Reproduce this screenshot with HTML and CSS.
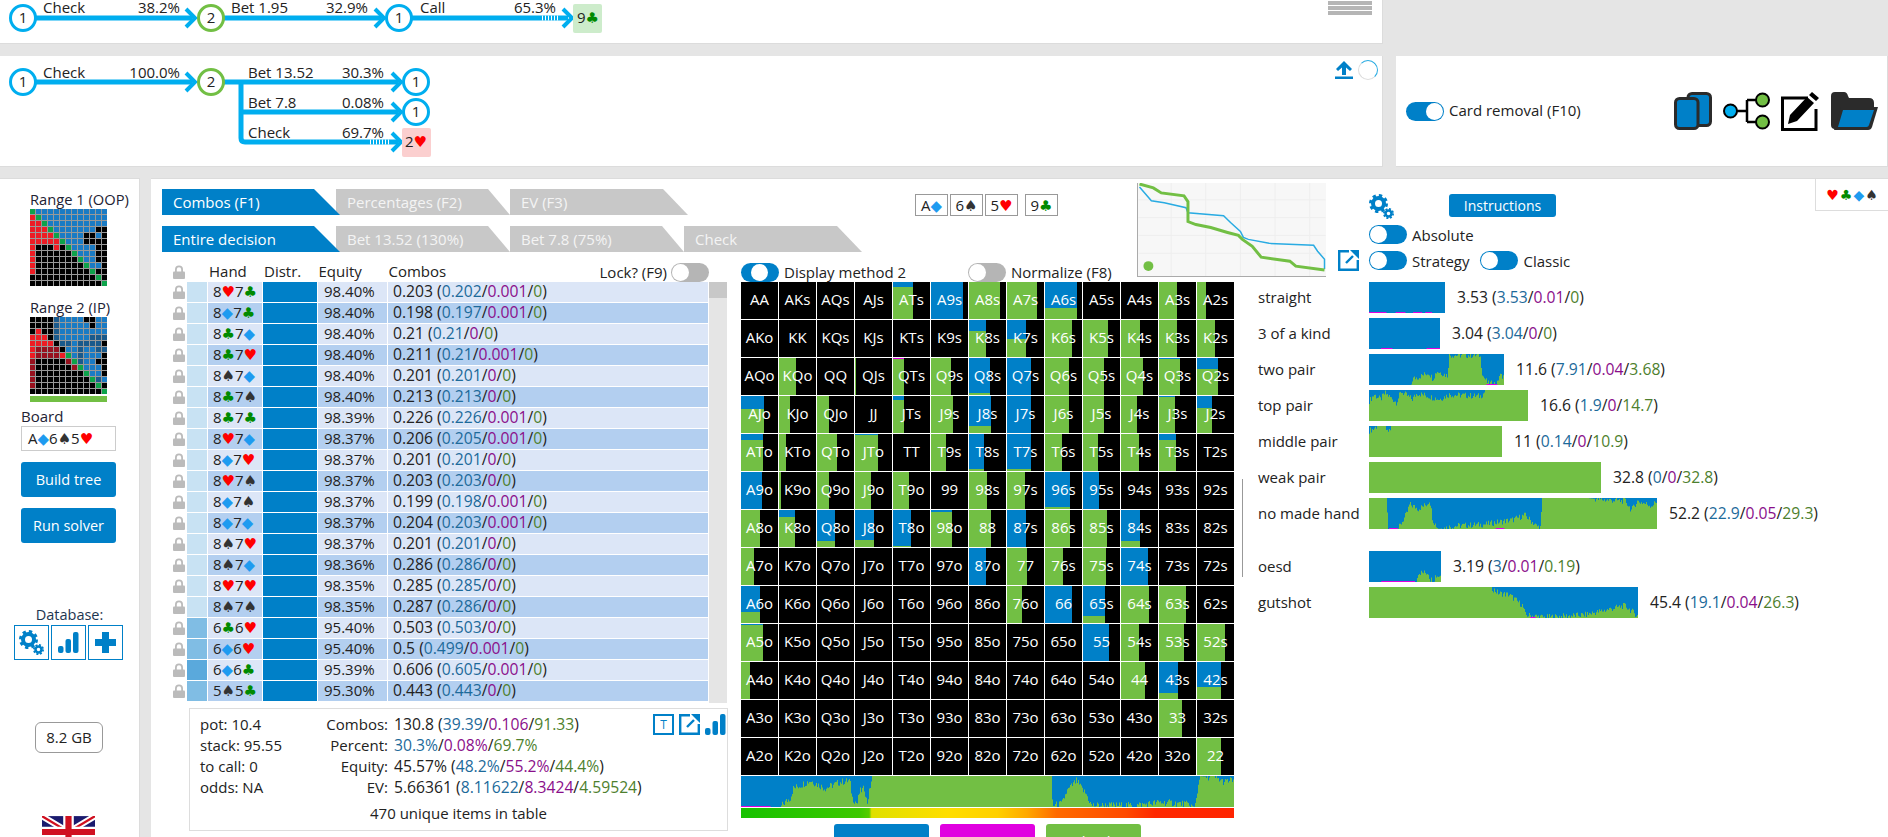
FILE: index.html
```html
<!DOCTYPE html>
<html lang="en">
  <head>
    <meta charset="UTF-8" />
    <title>Solver</title>
    <link rel="stylesheet" href="styles.css">
  </head>
  <body>
    <svg class="sprites" width="0" height="0">
      <symbol id="lock" viewBox="0 0 14 14">
        <path d="M3 7V4.500a4 4 0 0 1 8 0V7H9.200V4.500a2.200 2.200 0 0 0-4.400 0V7z" />
        <rect x="1" y="6.500" width="12" height="7.500" rx="1" />
      </symbol>
      <symbol id="gears" viewBox="0 0 25 25">
        <circle cx="9.500" cy="9.500" r="5.500" fill="none" stroke="currentColor" stroke-width="4" />
        <circle cx="9.500" cy="9.500" r="8" fill="none" stroke="currentColor" stroke-width="3" stroke-dasharray="3.300 3" />
        <circle cx="19.500" cy="19.500" r="3" fill="none" stroke="currentColor" stroke-width="2.500" />
        <circle cx="19.500" cy="19.500" r="4.600" fill="none" stroke="currentColor" stroke-width="1.800" stroke-dasharray="2 1.600" />
      </symbol>
      <symbol id="bars" viewBox="0 0 21 21">
        <rect x="0" y="14" width="5.500" height="7" rx="2" />
        <rect x="7.500" y="7" width="5.500" height="14" rx="2" />
        <rect x="15" y="0" width="5.500" height="21" rx="2" />
      </symbol>
      <symbol id="expand" viewBox="0 0 21 21">
        <path d="M11 1.200H1.200v18.600h18.600V10" fill="none" stroke="currentColor" stroke-width="2.400" />
        <path d="M8 13l7-7" fill="none" stroke="currentColor" stroke-width="2.400" />
        <path d="M12 0h9v9z" />
      </symbol>
    </svg>

    <div class="top-row">
      <div class="panel line-one">
        <svg class="flow" width="620" height="43">
          <path class="edge" d="M36 18H192" />
          <path class="edge" d="M224 18H381" />
          <path class="edge" d="M412 18H568" />
          <path class="dash" d="M542 18H560" />
          <path class="head" d="M186 9l9 9-9 9" />
          <path class="head" d="M375 9l9 9-9 9" />
          <path class="head" d="M563 9l9 9-9 9" />
          <circle class="node-a" cx="23" cy="18" r="12.500" />
          <circle class="node-b" cx="211" cy="18" r="12.500" />
          <circle class="node-a" cx="399" cy="18" r="12.500" />
          <text class="num" x="23" y="23">1</text>
          <text class="num" x="211" y="23">2</text>
          <text class="num" x="399" y="23">1</text>
          <text x="43" y="13">Check</text>
          <text class="end" x="180" y="13">38.2%</text>
          <text x="231" y="13">Bet 1.95</text>
          <text class="end" x="368" y="13">32.9%</text>
          <text x="420" y="13">Call</text>
          <text class="end" x="556" y="13">65.3%</text>
          <rect class="tile-club" x="573" y="4" width="29" height="29" rx="2" />
          <text x="577" y="23">9<tspan class="s-c">&#9827;</tspan></text>
        </svg>
        <div class="stripes"><i></i><i></i><i></i></div>
      </div>
    </div>

    <div class="mid-row">
      <div class="panel line-two">
        <svg class="flow" width="620" height="110">
          <path class="edge" d="M36 26H192" />
          <path class="edge" d="M224 26H398" />
          <path class="edge" d="M241 26V82q0 4 4 4H398" />
          <path class="edge" d="M241 56H398" />
          <path class="dash" d="M370 86H390" />
          <path class="head" d="M186 17l9 9-9 9" />
          <path class="head" d="M392 17l9 9-9 9" />
          <path class="head" d="M392 47l9 9-9 9" />
          <path class="head" d="M392 77l9 9-9 9" />
          <circle class="node-a" cx="23" cy="26" r="12.500" />
          <circle class="node-b" cx="211" cy="26" r="12.500" />
          <circle class="node-a" cx="416" cy="26" r="12.500" />
          <circle class="node-a" cx="416" cy="56" r="12.500" />
          <text class="num" x="23" y="31">1</text>
          <text class="num" x="211" y="31">2</text>
          <text class="num" x="416" y="31">1</text>
          <text class="num" x="416" y="61">1</text>
          <text x="43" y="22">Check</text>
          <text class="end" x="180" y="22">100.0%</text>
          <text x="248" y="22">Bet 13.52</text>
          <text class="end" x="384" y="22">30.3%</text>
          <text x="248" y="52">Bet 7.8</text>
          <text class="end" x="384" y="52">0.08%</text>
          <text x="248" y="82">Check</text>
          <text class="end" x="384" y="82">69.7%</text>
          <rect class="tile-heart" x="402" y="72" width="29" height="29" rx="2" />
          <text x="405" y="91">2<tspan class="s-h">&#9829;</tspan></text>
        </svg>
        <div class="sync">
          <svg class="blue" width="18" height="18" viewBox="0 0 18 18"><path d="M9 0l8 8-2 2-4-3.500V14H7V6.500L3 10 1 8zM0 15.500h18V18H0z" /></svg>
          <span class="spinner"></span>
        </div>
      </div>
      <div class="panel removal">
        <span class="toggle on"></span>
        <span class="removal-label">Card removal (F10)</span>
        <div class="tools">
          <svg width="38" height="38" viewBox="0 0 38 38">
            <rect x="14" y="1.500" width="22.500" height="32" rx="4" fill="#0080c8" stroke="#2b2b2b" stroke-width="3" />
            <rect x="1.500" y="6.500" width="22.500" height="30" rx="4" fill="#0080c8" stroke="#2b2b2b" stroke-width="3" />
          </svg>
          <svg width="47" height="38" viewBox="0 0 47 38">
            <path d="M14 19H24M24 8H34M24 30H34M24 8V30" fill="none" stroke="#000" stroke-width="2.500" />
            <circle cx="7.500" cy="19" r="6.500" fill="#00aeef" stroke="#000" stroke-width="2" />
            <circle cx="39.500" cy="8" r="6.500" fill="#72bf44" stroke="#000" stroke-width="2" />
            <circle cx="39.500" cy="30" r="6.500" fill="#72bf44" stroke="#000" stroke-width="2" />
          </svg>
          <svg width="39" height="39" viewBox="0 0 39 39">
            <path d="M27 6H1.500v31.500H35V17" fill="none" stroke="#000" stroke-width="3" />
            <path d="M31 0l7 6-3 3-7-6zM26 5l7 6-17 18-9 3 2-9z" />
          </svg>
          <svg width="47" height="38" viewBox="0 0 47 38">
            <path d="M0 4q0-4 4-4h9q3 0 4 4l1 2h20q5 0 5 5v4H11L5 37H4q-4 0-4-4z" fill="#2b2b2b" />
            <path d="M10 15h37l-6 20q-1 3-4 3H3z" fill="#2b2b2b" />
            <path d="M12 18h31l-5 15q-.5 2-2.500 2H7z" fill="#0080c8" />
          </svg>
        </div>
      </div>
    </div>

    <div class="bottom-row">
      <aside class="panel sidebar">
        <div class="side-label range-first">Range 1 (OOP)</div>
        <div class="mini" id="range1"></div>
        <div class="side-label range-second">Range 2 (IP)</div>
        <div class="mini" id="range2"></div>
        <div class="range-bar"></div>
        <div class="side-label board-label">Board</div>
        <div class="board-input">A<span class="s-d">&#9670;</span>6<span class="s-s">&#9824;</span>5<span class="s-h">&#9829;</span></div>
        <button class="side-btn">Build tree</button>
        <button class="side-btn">Run solver</button>
        <div class="db-label">Database:</div>
        <div class="db-btns">
          <button class="icon-btn"><svg width="25" height="25"><use href="#gears" /></svg></button>
          <button class="icon-btn"><svg width="21" height="21"><use href="#bars" /></svg></button>
          <button class="icon-btn"><svg width="21" height="21" viewBox="0 0 21 21"><path d="M7 0h7v7h7v7h-7v7H7v-7H0V7h7z" /></svg></button>
        </div>
        <div class="memory">8.2 GB</div>
        <svg class="flag" width="53" height="32" viewBox="0 0 60 36">
          <rect width="60" height="36" fill="#1a1a6e" />
          <path d="M0 0L60 36M60 0L0 36" stroke="#fff" stroke-width="7" />
          <path d="M0 0L60 36M60 0L0 36" stroke="#d01020" stroke-width="2.500" />
          <path d="M30 0V36M0 18H60" stroke="#fff" stroke-width="12" />
          <path d="M30 0V36M0 18H60" stroke="#d01020" stroke-width="7" />
        </svg>
      </aside>

      <main class="panel main">
        <div class="main-grid">
          <div class="head-row">
            <div class="tab-stack">
              <div class="tabs">
                <div class="tab active">Combos (F1)</div>
                <div class="tab">Percentages (F2)</div>
                <div class="tab">EV (F3)</div>
              </div>
              <div class="tabs">
                <div class="tab active">Entire decision</div>
                <div class="tab">Bet 13.52 (130%)</div>
                <div class="tab">Bet 7.8 (75%)</div>
                <div class="tab">Check</div>
              </div>
            </div>
            <div class="cards">
              <span class="card">A<span class="s-d">&#9670;</span></span>
              <span class="card">6<span class="s-s">&#9824;</span></span>
              <span class="card">5<span class="s-h">&#9829;</span></span>
              <span class="card river">9<span class="s-c">&#9827;</span></span>
            </div>
          </div>

          <div class="chart-box">
            <svg class="chart" width="189" height="94" viewBox="1137 183 189 94">
              <path class="chart-grid" d="M1137 200H1326M1137 218H1326M1137 236H1326M1137 254H1326M1170 183V277M1205 183V277M1240 183V277M1275 183V277M1310 183V277" />
              <polyline class="line-blue" points="1138,187 1150,201 1163,203 1185,208 1187,213 1223,216 1230,223 1240,232 1243,238 1248,240 1269,244 1314,246 1318,252 1325,260 1325,270" />
              <polyline class="line-green" points="1138,184 1152,188 1160,193 1183,196 1187,202 1187,222 1195,225 1210,228 1227,233 1238,236 1242,240 1252,247 1261,258 1290,262 1296,267 1325,271" />
              <circle cx="1147" cy="267" r="5" fill="#72bf44" />
            </svg>
            <svg class="blue chart-expand" width="21" height="21"><use href="#expand" /></svg>
          </div>

          <div class="settings">
            <div class="settings-top">
              <svg class="blue" width="25" height="25"><use href="#gears" /></svg>
              <button class="instructions">Instructions</button>
            </div>
            <div class="setting-line"><span class="toggle left"></span>Absolute</div>
            <div class="setting-line"><span class="toggle left"></span>Strategy<span class="toggle left classic"></span>Classic</div>
          </div>

          <div class="table-head">
            <svg class="lock"><use href="#lock" /></svg>
            <span class="th th-hand">Hand</span>
            <span class="th th-distr">Distr.</span>
            <span class="th th-equity">Equity</span>
            <span class="th th-combos">Combos</span>
            <span class="lock-switch">Lock? (F9)<span class="toggle off"></span></span>
          </div>

          <div class="grid-head">
            <span class="grid-opt"><span class="toggle mid"></span>Display method 2</span>
            <span class="grid-opt"><span class="toggle off"></span>Normalize (F8)</span>
          </div>

          <div class="table-col">
            <div class="table-wrap">
              <div class="rows" id="rows"></div>
              <div class="scroll"><div class="thumb"></div></div>
            </div>
            <div class="info">
              <div class="info-grid">
                <span>pot: 10.4</span>
                <span class="info-key">Combos:</span>
                <span class="info-val">130.8 (<b class="v1">39.39</b>/<b class="v2">0.106</b>/<b class="v3">91.33</b>)</span>
                <span class="info-icons">
                  <span class="t-box">T</span>
                  <svg class="blue" width="21" height="21"><use href="#expand" /></svg>
                  <svg class="blue" width="21" height="21"><use href="#bars" /></svg>
                </span>
                <span>stack: 95.55</span>
                <span class="info-key">Percent:</span>
                <span class="info-val"><b class="v1">30.3%</b>/<b class="v2">0.08%</b>/<b class="v3">69.7%</b></span>
                <span></span>
                <span>to call: 0</span>
                <span class="info-key">Equity:</span>
                <span class="info-val">45.57% (<b class="v1">48.2%</b>/<b class="v2">55.2%</b>/<b class="v3">44.4%</b>)</span>
                <span></span>
                <span>odds: NA</span>
                <span class="info-key">EV:</span>
                <span class="info-val">5.66361 (<b class="v1">8.11622</b>/<b class="v2">8.3424</b>/<b class="v3">4.59524</b>)</span>
                <span></span>
              </div>
              <div class="info-foot">470 unique items in table</div>
            </div>
          </div>

          <div class="grid-col">
            <div class="hands" id="hands"></div>
            <div class="strategy" id="strategy"></div>
            <div class="scale"></div>
            <div class="actions">
              <button class="act act-bet">Bet 13.52</button>
              <button class="act act-small">Bet 7.8</button>
              <button class="act act-check">Check</button>
            </div>
          </div>

          <div class="stats" id="stats"><i class="handle"></i></div>
        </div>
        <div class="suit-box"><span class="s-h">&#9829;</span><span class="s-c">&#9827;</span><span class="s-d">&#9670;</span><span class="s-s">&#9824;</span></div>
      </main>
    </div>

    <script src="app.js"></script>
  </body>
</html>
```

FILE: styles.css
```css
body {
  margin: 0;
  height: 837px;
  overflow: hidden;
  background-color: #e5e5e5;
  font-family: "Open Sans", Arial, sans-serif;
  font-size: 15px;
  color: #222;
}
.sprites {
  position: absolute;
}
.panel {
  background-color: #fff;
  border-right: 1px solid #dcdcdc;
  border-bottom: 1px solid #dcdcdc;
  box-sizing: border-box;
}
.blue {
  color: #0080c8;
  fill: #0080c8;
}
.s-h { color: #f00; fill: #f00; font-family: "DejaVu Sans", sans-serif; }
.s-c { color: #008a00; fill: #008a00; font-family: "DejaVu Sans", sans-serif; }
.s-d { color: #1e9bf0; fill: #1e9bf0; font-family: "DejaVu Sans", sans-serif; }
.s-s { color: #333; fill: #333; font-family: "DejaVu Sans", sans-serif; }

/* top rows */
.top-row {
  height: 44px;
  margin-bottom: 12px;
}
.line-one {
  width: 1383px;
  height: 44px;
  display: flex;
  justify-content: space-between;
  padding-right: 10px;
}
.stripes {
  width: 44px;
  margin-top: 1px;
}
.stripes i {
  display: block;
  height: 4px;
  margin-bottom: 1px;
  background-color: #b5b5b5;
}
.mid-row {
  display: flex;
  gap: 13px;
  height: 111px;
  margin-bottom: 11px;
}
.line-two {
  width: 1383px;
  display: flex;
  justify-content: space-between;
  padding-right: 4px;
}
.sync {
  display: flex;
  gap: 5px;
  align-items: center;
  align-self: flex-start;
  margin-top: 4px;
}
.spinner {
  width: 20px;
  height: 20px;
  box-sizing: border-box;
  border: 1px solid #ddd;
  border-top-color: #29abe2;
  border-right-color: #29abe2;
  border-radius: 50%;
}
.flow text {
  font-size: 15px;
  fill: #222;
}
.flow .end {
  text-anchor: end;
}
.flow .num {
  text-anchor: middle;
}
.flow .edge {
  fill: none;
  stroke: #00aeef;
  stroke-width: 5;
}
.flow .head {
  fill: none;
  stroke: #00aeef;
  stroke-width: 4;
}
.flow .dash {
  fill: none;
  stroke: #fff;
  stroke-width: 5;
  stroke-dasharray: 1 2;
}
.node-a {
  fill: #fff;
  stroke: #00aeef;
  stroke-width: 3;
}
.node-b {
  fill: #fff;
  stroke: #72bf44;
  stroke-width: 3;
}
.tile-club {
  fill: #cdeccb;
}
.tile-heart {
  fill: #fbcfcf;
}
.removal {
  flex: 1;
  display: flex;
  align-items: center;
  padding: 0 9px 0 10px;
}
.removal-label {
  margin: 0 0 2px 5px;
}
.tools {
  margin-left: auto;
  display: flex;
  align-items: center;
  gap: 11px;
}

/* toggles */
.toggle {
  display: inline-block;
  flex: none;
  width: 38px;
  height: 19px;
  border-radius: 10px;
  background-color: #0080c8;
  box-sizing: border-box;
  padding: 1px;
}
.toggle::before {
  content: "";
  display: block;
  width: 17px;
  height: 17px;
  border-radius: 50%;
  background-color: #fff;
}
.toggle.on::before { margin-left: 19px; }
.toggle.mid::before { margin-left: 9px; }
.toggle.off { background-color: #b5b5b5; }

/* bottom */
.bottom-row {
  display: flex;
  gap: 11px;
  height: 660px;
}
.sidebar {
  width: 140px;
  height: 660px;
  overflow: hidden;
  border-top: 1px solid #dcdcdc;
  flex: none;
  padding-left: 21px;
}
.side-label {
  line-height: 20px;
  white-space: nowrap;
  color: #223;
}
.range-first,
.range-second {
  font-size: 14.700px;
}
.range-first {
  margin: 10px 0 0 9px;
}
.mini {
  margin-left: 9px;
  width: 77px;
  height: 77px;
  display: grid;
  grid-template-columns: repeat(13, 5px);
  grid-auto-rows: 5px;
  gap: 1px;
  background-color: #999;
}
.mini i { display: block; }
.m-G { background-color: #0da34a; }
.m-B { background-color: #1a7bc4; }
.m-D { background-color: #1a5a8c; }
.m-R { background-color: #ed1c24; }
.m-r { background-color: #98111e; }
.m-K { background-color: #000; }
.range-second {
  margin: 11px 0 0 9px;
}
.range-bar {
  margin: 2px 0 0 9px;
  width: 77px;
  height: 6px;
  background-color: #72bf44;
}
.board-label {
  margin-top: 4px;
}
.board-input {
  width: 95px;
  height: 25px;
  box-sizing: border-box;
  border: 1px solid #ccc;
  padding-left: 6px;
  line-height: 23px;
  white-space: nowrap;
}
.side-btn {
  display: block;
  width: 95px;
  height: 35px;
  margin-top: 11px;
  background-color: #0080c8;
  color: #fff;
  border: none;
  border-radius: 3px;
  padding: 0;
  font: inherit;
  font-size: 14.500px;
}
.db-label {
  margin: 62px 0 0 -6px;
  width: 109px;
  text-align: center;
  line-height: 20px;
  font-size: 14.500px;
  color: #1d3550;
}
.db-btns {
  display: flex;
  gap: 2px;
  margin-left: -7px;
}
.icon-btn {
  width: 35px;
  height: 35px;
  padding: 0;
  border: 1px solid #0080c8;
  background-color: #fff;
  color: #0080c8;
  fill: #0080c8;
  display: flex;
  align-items: center;
  justify-content: center;
}
.memory {
  margin: 62px 0 0 14px;
  width: 68px;
  height: 31px;
  box-sizing: border-box;
  border: 1px solid #999;
  border-radius: 6px;
  text-align: center;
  line-height: 29px;
}
.flag {
  display: block;
  margin: 63px 0 0 21px;
}

/* main panel */
.main {
  flex: 1;
  position: relative;
  height: 660px;
  overflow: hidden;
  border-top: 1px solid #dcdcdc;
  border-right: none;
  padding: 4px 0 0 11px;
}
.main-grid {
  display: grid;
  grid-template-columns: 579px 396px 232px 1fr;
  grid-template-rows: 69px 30px 1fr;
}
.head-row {
  grid-column: 1 / 3;
  grid-row: 1;
  display: flex;
  padding-top: 6px;
}
.tab-stack {
  width: 753px;
  flex: none;
}
.tabs {
  display: flex;
  margin-bottom: 11px;
}
.tab {
  width: 174px;
  height: 26px;
  padding-left: 11px;
  box-sizing: border-box;
  line-height: 26px;
  background-color: #c8c8c8;
  color: #f4f4f4;
  clip-path: polygon(0 0, 152px 0, 174px 100%, 0 100%);
}
.tab:last-child {
  width: 178px;
  clip-path: polygon(0 0, 153px 0, 178px 100%, 0 100%);
}
.tab.active {
  width: 178px;
  margin-right: -4px;
  position: relative;
  z-index: 1;
  background-color: #0080c8;
  color: #fff;
  clip-path: polygon(0 0, 152px 0, 178px 100%, 0 100%);
}
.cards {
  display: flex;
  gap: 2px;
  height: 22px;
  margin-top: 5px;
}
.card {
  width: 33px;
  height: 22px;
  box-sizing: border-box;
  border: 1px solid #999;
  text-align: center;
  line-height: 20px;
}
.card.river {
  margin-left: 5px;
}
.chart-box {
  grid-column: 3;
  grid-row: 1 / 3;
  display: flex;
  align-items: flex-end;
  gap: 12px;
  padding-bottom: 5px;
}
.chart {
  display: block;
  background-color: #f7f7f7;
  border-left: 1px solid #aaa;
  border-bottom: 1px solid #aaa;
  box-sizing: border-box;
}
.chart-grid {
  stroke: #eee;
  fill: none;
}
.line-blue {
  fill: none;
  stroke: #29abe2;
  stroke-width: 1.500;
}
.line-green {
  fill: none;
  stroke: #72bf44;
  stroke-width: 3;
}
.chart-expand {
  margin-bottom: 6px;
}
.settings {
  grid-column: 4;
  grid-row: 1 / 3;
  padding-top: 11px;
}
.settings-top {
  display: flex;
  align-items: flex-start;
  gap: 55px;
  height: 31px;
}
.instructions {
  width: 107px;
  height: 23px;
  padding: 0;
  border: none;
  border-radius: 3px;
  background-color: #0080c8;
  color: #fff;
  font: inherit;
  font-size: 14px;
}
.setting-line {
  display: flex;
  align-items: center;
  gap: 5px;
  height: 19px;
  margin-bottom: 7px;
}
.classic {
  margin-left: 6px;
}

/* hand table */
.table-head {
  grid-column: 1;
  grid-row: 2;
  display: flex;
  align-items: center;
  width: 547px;
  height: 20px;
  align-self: end;
  white-space: nowrap;
}
.table-head > * {
  flex: none;
}
.th {
  margin-bottom: 2px;
}
.lock {
  width: 14px;
  height: 14px;
  fill: #bbb;
  margin-left: 10px;
  flex: none;
}
.th-hand { margin-left: 23px; width: 55px; }
.th-distr { width: 54.500px; }
.th-equity { width: 70px; }
.lock-switch {
  margin-left: auto;
  display: flex;
  align-items: center;
  gap: 4px;
}
.grid-head {
  grid-column: 2 / 4;
  grid-row: 2;
  align-self: end;
  display: flex;
  height: 20px;
  align-items: center;
}
.grid-opt {
  flex: none;
  display: flex;
  align-items: center;
  gap: 5px;
  width: 227px;
}
.table-col {
  grid-column: 1;
  grid-row: 3;
}
.table-wrap {
  display: flex;
  width: 565px;
}
.rows {
  width: 546px;
}
.row {
  display: flex;
  height: 20px;
  margin-bottom: 1px;
  line-height: 19px;
  white-space: nowrap;
}
.row .lock {
  margin: 3px 1px 3px 10px;
}
.c-weight { width: 20px; margin-right: 1px; }
.c-hand { width: 49px; padding-left: 5px; margin-right: 1px; }
.c-distr { width: 54px; background-color: #0080c8; }
.c-eq { width: 63px; padding-left: 6px; margin-left: 1px; margin-right: 1px; }
.c-combos { width: 315px; padding-left: 5px; font-size: 15.700px; }
.row:nth-child(odd) .c-hand,
.row:nth-child(odd) .c-eq,
.row:nth-child(odd) .c-combos { background-color: #dce6f7; }
.row:nth-child(even) .c-hand,
.row:nth-child(even) .c-eq,
.row:nth-child(even) .c-combos { background-color: #b3cff0; }
.scroll {
  width: 18px;
  margin-left: 1px;
  height: 421px;
  background-color: #e5e5e5;
}
.thumb {
  height: 16px;
  background-color: #c8c8c8;
}
.v1 { color: #1d6a9a; font-weight: normal; }
.v2 { color: #8a0e8a; font-weight: normal; }
.v3 { color: #4e7f2e; font-weight: normal; }
.info {
  width: 539px;
  height: 123px;
  margin: 5px 0 0 27px;
  box-sizing: border-box;
  border: 1px solid #ddd;
  padding: 5px 0 0 10px;
}
.info-grid {
  display: grid;
  grid-template-columns: 94px 88px 1fr auto;
  grid-auto-rows: 21px;
  column-gap: 6px;
  line-height: 21px;
  white-space: nowrap;
}
.info-key {
  text-align: right;
}
.info-val {
  font-size: 15.700px;
}
.info-icons {
  display: flex;
  gap: 5px;
  margin-right: 1px;
}
.t-box {
  width: 21px;
  height: 21px;
  box-sizing: border-box;
  border: 2px solid #0080c8;
  color: #0080c8;
  text-align: center;
  line-height: 17px;
  font-size: 12px;
}
.info-foot {
  margin-top: 5px;
  margin-right: 10px;
  text-align: center;
  line-height: 21px;
}

/* hand grid */
.grid-col {
  grid-column: 2 / 4;
  grid-row: 3;
  width: 493px;
}
.hands {
  display: grid;
  grid-template-columns: repeat(13, 37px);
  grid-auto-rows: 37px;
  gap: 1px;
}
.cell {
  display: grid;
  background-color: #000;
  overflow: hidden;
}
.cell > * {
  grid-area: 1 / 1;
}
.fill {
  display: flex;
  flex-direction: column;
  background-color: #72bf44;
  justify-self: start;
}
.fill-b { background-color: #0080c8; }
.fill-m { background-color: #e000e0; }
.cell-name {
  place-self: center;
  margin-bottom: 3px;
  color: #fff;
}
.strategy {
  height: 31px;
  margin-top: 1px;
}
.scale {
  height: 10px;
  margin-top: 1px;
  background: linear-gradient(90deg, #17c200 0, #3cc800 24%, #55cc00 26%, #dfe000 26.5%, #ffde00 42%, #ffd000 52%, #ffa800 58%, #ff6a00 64%, #ff4a00 78%, #ff2800 84%, #ff2400 100%);
}
.actions {
  display: flex;
  gap: 11px;
  margin: 6px 0 0 93px;
}
.act {
  width: 95px;
  height: 34px;
  border: none;
  border-radius: 3px;
  padding: 0;
  color: #fff;
  font: inherit;
}
.act-bet { background-color: #0080c8; }
.act-small { background-color: #e000e0; }
.act-check { background-color: #72bf44; }

/* hand class bars */
.stats {
  grid-column: 3 / 5;
  grid-row: 3;
  position: relative;
  padding-left: 121px;
}
.stat {
  display: flex;
  align-items: center;
  height: 31px;
  margin-bottom: 5px;
}
.stat.later {
  margin-top: 22px;
}
.stat-label {
  width: 111px;
  flex: none;
  margin-bottom: 2px;
}
.stat svg {
  display: block;
  flex: none;
}
.stat-text {
  margin: 0 0 2px 12px;
  white-space: nowrap;
  font-size: 15.700px;
}
.handle {
  position: absolute;
  left: 105px;
  top: 197px;
  width: 1px;
  height: 98px;
  background-color: #999;
}
.suit-box {
  position: absolute;
  top: 0;
  right: 0;
  width: 73px;
  height: 32px;
  box-sizing: border-box;
  border-left: 1px solid #ddd;
  border-bottom: 1px solid #ddd;
  display: flex;
  justify-content: center;
  align-items: center;
  gap: 1px;
  font-size: 14px;
}
```

FILE: app.js
```javascript
const RANKS = "AKQJT98765432";

// width of the coloured part in px, blue share in %, magenta share in %
const HANDS = {
  ATs: [20, 14], A9s: [32, 100], A8s: [31, 0], A7s: [30, 0], A6s: [32, 70], A3s: [18, 0], A2s: [9, 0],
  K8s: [17, 30], K7s: [19, 50], K6s: [27, 0], K5s: [25, 0], K4s: [19, 0], K3s: [18, 0], K2s: [18, 0],
  KQo: [17, 0], QJs: [1, 0], QTs: [11, 0, 3], Q9s: [20, 0], Q8s: [21, 95], Q7s: [24, 100], Q6s: [24, 0],
  Q5s: [21, 0], Q4s: [22, 0], Q3s: [21, 3], Q2s: [21, 30],
  AJo: [23, 35], KJo: [11, 0], QJo: [12, 0], JTs: [11, 10], J9s: [22, 0], J8s: [22, 80], J7s: [24, 100],
  J6s: [24, 0], J5s: [21, 0], J4s: [16, 0], J3s: [16, 3], J2s: [15, 32],
  ATo: [22, 15], KTo: [7, 0], QTo: [20, 0], JTo: [23, 3], T9s: [15, 0], T8s: [15, 95], T7s: [24, 95],
  T6s: [17, 0], T5s: [15, 0], T4s: [18, 0], T3s: [17, 15],
  A9o: [21, 100], K9o: [2, 0], Q9o: [12, 0], J9o: [16, 0], T9o: [16, 0], "98s": [18, 0], "97s": [18, 0],
  "96s": [25, 95], "95s": [16, 100],
  A8o: [19, 0], K8o: [16, 20], Q8o: [18, 85], J8o: [19, 82], T8o: [18, 97], "98o": [21, 6], 88: [22, 0],
  "87s": [19, 100], "86s": [25, 0], "85s": [24, 0], "84s": [19, 85],
  A7o: [13, 0], "87o": [17, 100], 77: [20, 0], "76s": [18, 0], "75s": [23, 0], "74s": [27, 100],
  A6o: [19, 70], "76o": [15, 0], 66: [27, 100], "65s": [22, 80], "64s": [28, 0], "63s": [27, 0],
  A5o: [22, 3], 55: [26, 100], "54s": [18, 0], "53s": [25, 0], "52s": [28, 0],
  A4o: [9, 0], 44: [24, 0], "43s": [19, 84], "42s": [24, 68],
  33: [23, 0], 22: [24, 0],
};

const hands = document.getElementById("hands");
for (let i = 0; i < 13; i++) {
  for (let j = 0; j < 13; j++) {
    let name = RANKS[i] + RANKS[i];
    if (i < j) name = RANKS[i] + RANKS[j] + "s";
    if (i > j) name = RANKS[j] + RANKS[i] + "o";
    const data = HANDS[name];
    let fill = "";
    if (data) {
      const magenta = data[2] ? `<div class="fill-m" style="height:${data[2]}%"></div>` : "";
      fill = `<div class="fill" style="width:${data[0]}px">${magenta}<div class="fill-b" style="height:${data[1]}%"></div></div>`;
    }
    hands.innerHTML += `<div class="cell">${fill}<span class="cell-name">${name}</span></div>`;
  }
}

const SUITS = {
  h: '<span class="s-h">&#9829;</span>',
  c: '<span class="s-c">&#9827;</span>',
  d: '<span class="s-d">&#9670;</span>',
  s: '<span class="s-s">&#9824;</span>',
};

// hand, weight colour, equity, combos, then the three split numbers
const ROWS = [
  ["8h7c", "#c8e2f3", "98.40", "0.203", "0.202", "0.001", "0"],
  ["8d7c", "#c8e2f3", "98.40", "0.198", "0.197", "0.001", "0"],
  ["8c7d", "#c8e2f3", "98.40", "0.21", "0.21", "0", "0"],
  ["8c7h", "#c8e2f3", "98.40", "0.211", "0.21", "0.001", "0"],
  ["8s7d", "#c8e2f3", "98.40", "0.201", "0.201", "0", "0"],
  ["8c7s", "#c8e2f3", "98.40", "0.213", "0.213", "0", "0"],
  ["8c7c", "#c8e2f3", "98.39", "0.226", "0.226", "0.001", "0"],
  ["8h7d", "#c8e2f3", "98.37", "0.206", "0.205", "0.001", "0"],
  ["8d7h", "#c8e2f3", "98.37", "0.201", "0.201", "0", "0"],
  ["8h7s", "#c8e2f3", "98.37", "0.203", "0.203", "0", "0"],
  ["8d7s", "#c8e2f3", "98.37", "0.199", "0.198", "0.001", "0"],
  ["8d7d", "#c8e2f3", "98.37", "0.204", "0.203", "0.001", "0"],
  ["8s7h", "#c8e2f3", "98.37", "0.201", "0.201", "0", "0"],
  ["8s7d", "#c8e2f3", "98.36", "0.286", "0.286", "0", "0"],
  ["8h7h", "#c8e2f3", "98.35", "0.285", "0.285", "0", "0"],
  ["8s7s", "#c8e2f3", "98.35", "0.287", "0.286", "0", "0"],
  ["6c6h", "#80bde4", "95.40", "0.503", "0.503", "0", "0"],
  ["6d6h", "#80bde4", "95.40", "0.5", "0.499", "0.001", "0"],
  ["6d6c", "#5aa9dc", "95.39", "0.606", "0.605", "0.001", "0"],
  ["5s5c", "#80bde4", "95.30", "0.443", "0.443", "0", "0"],
];

document.getElementById("rows").innerHTML = ROWS.map((r) => {
  const h = r[0];
  const hand = h[0] + SUITS[h[1]] + h[2] + SUITS[h[3]];
  return `<div class="row">
    <svg class="lock"><use href="#lock" /></svg>
    <span class="c-weight" style="background-color:${r[1]}"></span>
    <span class="c-hand">${hand}</span>
    <span class="c-distr"></span>
    <span class="c-eq">${r[2]}%</span>
    <span class="c-combos">${r[3]} (<b class="v1">${r[4]}</b>/<b class="v2">${r[5]}</b>/<b class="v3">${r[6]}</b>)</span>
  </div>`;
}).join("");

const RANGE1 = [
  "GBBBBBBBBBBBB",
  "RGBBBBBBBBBBB",
  "RRGBBBBBBBBBB",
  "RRRGBBBBBBBKK",
  "RRRRGBBBBKKBK",
  "RRRRRGBBBKKKK",
  "RKKKRKGBBBBKK",
  "RKKKKKKGBBBKK",
  "RKKKKKKKGBBKK",
  "RKKKKKKKKGBBK",
  "RKKKKKKKKKGKK",
  "KKKKKKKKKKKGK",
  "KKKKKKKKKKKKG",
];
const RANGE2 = [
  "KKKKDBBBBKKBB",
  "KKKKDBBBBBKBB",
  "KRKKDBBBBBBBB",
  "RRRKDBBBBBDDD",
  "RRRRKDDBDDDDK",
  "RrrrrKBBDBBDD",
  "RrrrrRGBDBBBK",
  "rKKKKKrGDBBKK",
  "rKKKKKKrGBBBK",
  "rKKKKKKKKGBBK",
  "rKKKKKKKKKGDB",
  "rKKKKKKKKKKGK",
  "KKKKKKKKKKKKG",
];
function drawRange(id, lines) {
  document.getElementById(id).innerHTML = lines
    .join("")
    .split("")
    .map((c) => `<i class="m-${c}"></i>`)
    .join("");
}
drawRange("range1", RANGE1);
drawRange("range2", RANGE2);

// repeatable scatter, so the bars look the same on every load
function scatter(x) {
  const n = Math.sin(x * 12.9898) * 43758.5453;
  return (n - Math.floor(n)) * 2 - 1;
}

// profile: [x share, green height share], interpolated with spikes
function jagged(profile, w, h, noise) {
  const pts = [`0,${h}`];
  let k = 0;
  for (let x = 0; x <= w; x += 1) {
    const t = x / w;
    while (k < profile.length - 2 && profile[k + 1][0] < t) k++;
    const a = profile[k];
    const b = profile[k + 1];
    const s = Math.min(1, Math.max(0, (t - a[0]) / (b[0] - a[0] || 1)));
    let v = a[1] + (b[1] - a[1]) * s;
    if (v > 0.02 && v < 0.98) v += scatter(x) * noise;
    const y = (h - Math.min(1, Math.max(0, v)) * h).toFixed(1);
    pts.push(`${x},${y}`, `${x + 1},${y}`);
  }
  pts.push(`${w},${h}`);
  return pts.join(" ");
}

function barSvg(profile, w, h, noise, pink) {
  const bits = (pink || [])
    .map((p) => `<rect x="${p[0] * w}" y="${h - 1}" width="${p[1] * w}" height="1" fill="#e000e0" />`)
    .join("");
  return `<svg width="${w}" height="${h}"><rect width="${w}" height="${h}" fill="#0080c8" /><polygon points="${jagged(profile, w, h, noise)}" fill="#72bf44" />${bits}</svg>`;
}

const STATS = [
  { name: "straight", w: 76, p: [[0, 0], [1, 0]], t: [3.53, 3.53, 0.01, 0], pink: [[0, 0.23], [0.35, 0.13], [0.58, 0.12], [0.74, 0.09]] },
  { name: "3 of a kind", w: 71, p: [[0, 0], [1, 0]], t: [3.04, 3.04, 0, 0], pink: [[0.17, 0.16], [0.81, 0.19]] },
  { name: "two pair", w: 135, p: [[0, 0], [0.31, 0], [0.32, 0.2], [0.36, 0.25], [0.44, 0.4], [0.47, 0.2], [0.5, 0.45], [0.58, 0.3], [0.59, 0.96], [0.82, 0.96], [0.84, 0.3], [0.88, 0.05], [0.95, 0.05], [0.96, 0.3], [1, 0.3]], t: [11.6, 7.91, 0.04, 3.68], pink: [[0.87, 0.08]] },
  { name: "top pair", w: 159, p: [[0, 0.65], [0.03, 0.85], [0.07, 0.7], [0.1, 0.9], [0.17, 0.6], [0.2, 0.95], [0.27, 0.7], [0.3, 0.9], [0.44, 0.7], [0.5, 0.85], [0.7, 0.8], [0.72, 0.9], [0.73, 1], [1, 1]], t: [16.6, 1.9, 0, 14.7] },
  { name: "middle pair", w: 133, p: [[0, 0.85], [0.03, 0.9], [0.06, 1], [0.12, 1], [0.13, 0.85], [0.16, 0.85], [0.165, 1], [1, 1]], t: [11, 0.14, 0, 10.9] },
  { name: "weak pair", w: 232, p: [[0, 1], [1, 1]], t: [32.8, 0, 0, 32.8] },
  { name: "no made hand", w: 288, p: [[0, 1], [0.06, 1], [0.065, 0], [0.1, 0], [0.13, 0.5], [0.14, 0.8], [0.17, 0.65], [0.2, 0.8], [0.21, 0.95], [0.22, 0.3], [0.24, 0], [0.3, 0.1], [0.4, 0.15], [0.5, 0.3], [0.54, 0.45], [0.58, 0.1], [0.595, 0.05], [0.6, 1], [0.76, 1], [0.8, 0.95], [0.89, 0.9], [0.91, 0.6], [0.93, 0.9], [0.98, 0.75], [1, 0.9]], t: [52.2, 22.9, 0.05, 29.3], pink: [[0.07, 0.03], [0.44, 0.03]] },
  { name: "oesd", w: 72, later: true, p: [[0, 0], [0.66, 0], [0.67, 0.3], [0.82, 0.3], [0.84, 0.1], [0.9, 0.05], [0.91, 0.2], [1, 0.2]], t: [3.19, 3, 0.01, 0.19], pink: [[0.17, 0.47]] },
  { name: "gutshot", w: 269, p: [[0, 1], [0.45, 1], [0.48, 0.8], [0.52, 0.75], [0.57, 0.4], [0.58, 0.1], [0.65, 0.02], [0.8, 0.1], [0.9, 0.3], [0.95, 0.4], [1, 0.05]], t: [45.4, 19.1, 0.04, 26.3], pink: [[0.6, 0.02]] },
];

document.getElementById("stats").insertAdjacentHTML("beforeend", STATS.map((s) => `
  <div class="stat${s.later ? " later" : ""}">
    <span class="stat-label">${s.name}</span>
    ${barSvg(s.p, s.w, 31, 0.1, s.pink)}
    <span class="stat-text">${s.t[0]} (<b class="v1">${s.t[1]}</b>/<b class="v2">${s.t[2]}</b>/<b class="v3">${s.t[3]}</b>)</span>
  </div>`).join(""));

document.getElementById("strategy").innerHTML = barSvg(
  [[0, 0], [0.08, 0], [0.085, 0.1], [0.1, 0.3], [0.105, 0.6], [0.12, 0.7], [0.14, 0.85], [0.17, 0.6], [0.2, 0.8], [0.22, 0.85], [0.225, 0.3], [0.235, 0.1], [0.24, 0.5], [0.25, 0.6], [0.255, 0.1], [0.265, 0.95], [0.27, 1], [0.63, 1], [0.631, 0.05], [0.65, 0.1], [0.66, 0.5], [0.68, 0.85], [0.69, 0.6], [0.7, 0.4], [0.71, 0.05], [0.8, 0.05], [0.85, 0.15], [0.9, 0.1], [0.92, 0], [0.93, 1], [0.96, 0.95], [0.98, 0.8], [1, 0.9]],
  493, 31, 0.12, [[0, 0.06]]
);
```
